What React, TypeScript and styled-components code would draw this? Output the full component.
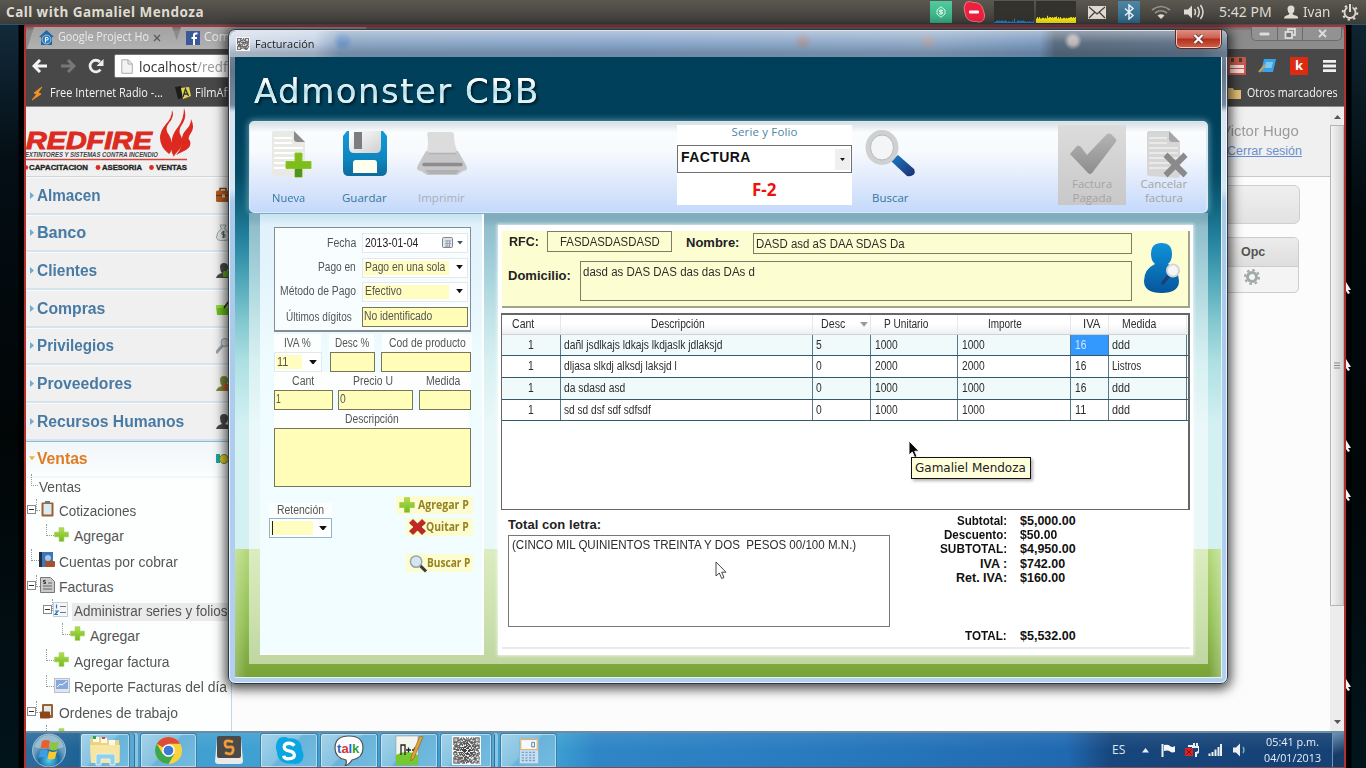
import React, { useLayoutEffect, useRef, useState } from "react";
import styled, { createGlobalStyle, css } from "styled-components";

const Global = createGlobalStyle`
  * { box-sizing: border-box; }
  body { margin: 0; overflow: hidden; background: #01070b; font-family: "Liberation Sans", Arial, sans-serif; }
  svg { display: block; flex: none; }
`;

const ubuntu = '"Noto Sans", "Open Sans", sans-serif';
const segoe = '"Open Sans", "Noto Sans", sans-serif';

/* ---------- text with an optional target width ---------- */
const TextBox = styled.span`
  display: inline-block;
  flex: none;
  justify-self: start;
  vertical-align: top;
  line-height: 1.2;
`;
const TextSpan = styled.span<{ $s: number; $c: string; $b?: boolean; $f?: string; $u?: boolean }>`
  display: inline-block;
  vertical-align: top;
  transform-origin: 0 50%;
  white-space: pre;
  font-size: ${(p) => p.$s}px;
  line-height: 1.2;
  color: ${(p) => p.$c};
  font-weight: ${(p) => (p.$b ? 700 : 400)};
  text-decoration: ${(p) => (p.$u ? "underline" : "none")};
  ${(p) => p.$f && css`font-family: ${p.$f};`}
`;

type TextProps = { children: string; w?: number; s?: number; c?: string; b?: boolean; f?: string; u?: boolean };

function Text({ children, w, s = 12, c = "#333", b, f, u }: TextProps) {
  const ref = useRef<HTMLSpanElement>(null);
  const [fit, setFit] = useState({ spacing: 0, scale: 1 });
  useLayoutEffect(() => {
    if (!w || !ref.current) return;
    const natural = ref.current.offsetWidth;
    if (natural > w) setFit({ spacing: 0, scale: w / natural });
    else setFit({ spacing: (w - natural) / children.length, scale: 1 });
  }, []);
  return (
    <TextBox style={{ width: w, fontSize: s }}>
      <TextSpan
        ref={ref}
        $s={s}
        $c={c}
        $b={b}
        $f={f}
        $u={u}
        style={{ letterSpacing: fit.spacing, transform: fit.scale === 1 ? undefined : `scaleX(${fit.scale})` }}
      >
        {children}
      </TextSpan>
    </TextBox>
  );
}

/* ---------- host desktop ---------- */
const Desktop = styled.div`
  position: relative;
  width: 1366px;
  height: 768px;
  overflow: hidden;
  display: flex;
  flex-direction: column;
`;
const TopPanel = styled.header`
  height: 25px;
  flex: none;
  display: flex;
  align-items: center;
  justify-content: space-between;
  padding: 0 7px 0 6px;
  background: linear-gradient(#5a584f, #3d3c38);
  border-bottom: 1px solid #2b5570;
`;
const Indicators = styled.div`
  display: flex;
  align-items: center;
  height: 24px;
`;
const Gap = styled.i<{ $w: number }>`
  flex: none;
  width: ${(p) => p.$w}px;
`;
const Tile = styled.div<{ $bg: string; $s?: number }>`
  width: ${(p) => p.$s ?? 22}px;
  height: ${(p) => p.$s ?? 22}px;
  display: flex;
  align-items: center;
  justify-content: center;
  background: ${(p) => p.$bg};
`;
const Stage = styled.div`
  flex: 1;
  display: flex;
  min-height: 0;
`;
const SideStrip = styled.div<{ $w: number; $right?: boolean }>`
  width: ${(p) => p.$w}px;
  flex: none;
  background: ${(p) =>
    p.$right
      ? "linear-gradient(90deg, #000 5px, transparent 6px), linear-gradient(#0e2430, #020a0e 25%, #010608 60%, #02151c)"
      : "linear-gradient(90deg, transparent 18px, #000 19px), linear-gradient(#122a3a, #040e15 18%, #010506 55%, #02141b)"};
`;
const Remote = styled.div`
  width: 1322px;
  flex: none;
  display: flex;
  flex-direction: column;
  border: 2px solid #b2302e;
  border-bottom: 1px solid #7d4a5c;
  border-radius: 2px 2px 0 0;
  overflow: hidden;
`;

/* ---------- browser ---------- */
const TabStrip = styled.div`
  height: 22px;
  flex: none;
  display: flex;
  background: linear-gradient(#7a6464, #8a8a8a 4px, #8c8c8c);
`;
const Tab = styled.div<{ $w: number; $ml?: number }>`
  width: ${(p) => p.$w}px;
  margin-left: ${(p) => p.$ml ?? 0}px;
  display: flex;
  align-items: center;
  gap: 4px;
  padding: 0 0 1px 12px;
  background: linear-gradient(#a2a2a2, #b1b1b1);
  clip-path: polygon(7px 0, calc(100% - 8px) 0, 100% 100%, 0 100%);
`;
const WinControls = styled.div`
  margin-left: auto;
  width: 91px;
  height: 14px;
  display: grid;
  grid-template-columns: 25px 25px 1fr;
  border: 1px solid #6b6b6b;
  border-top: 0;
  border-radius: 0 0 5px 5px;
  margin-right: 2px;
  background: #929292;
  & > div { display: grid; place-items: center; }
  & > div + div { border-left: 1px solid #6b6b6b; }
`;
const NavBar = styled.div`
  height: 34px;
  flex: none;
  display: flex;
  align-items: center;
  background: #484848;
  padding-left: 6px;
`;
const Address = styled.div`
  display: flex;
  align-items: center;
  gap: 6px;
  width: 300px;
  height: 24px;
  margin-left: 10px;
  padding-left: 6px;
  background: #fff;
  border: 1px solid #777;
  border-radius: 2px;
`;
const NavActions = styled.div`
  margin-left: auto;
  display: flex;
  align-items: center;
  padding-right: 8px;
`;
const Bookmarks = styled.div`
  height: 24px;
  flex: none;
  display: flex;
  align-items: center;
  padding: 0 5px 3px 5px;
  background: #484848;
  border-bottom: 1px solid #8b8b8b;
`;
const Page = styled.div`
  flex: 1;
  min-height: 0;
  display: flex;
  background: #fcfcfc;
`;
const Sidebar = styled.nav`
  width: 206px;
  flex: none;
  overflow: hidden;
  background: #fdfefe;
  border-right: 1px solid #c3d9e8;
`;
const LogoBox = styled.div`
  height: 70px;
  background: #f0f0f0;
  border-bottom: 1px solid #d0d5d8;
`;
const MenuRow = styled.div<{ $open?: boolean }>`
  height: 37.66px;
  display: flex;
  align-items: center;
  padding: 1px 0 1px 3px;
  gap: 2px;
  background: ${(p) => (p.$open ? "linear-gradient(#f1f6f9, #fbfdfe)" : "#f0f0f0")};
  border-top: 1px solid ${(p) => (p.$open ? "#8fb9d8" : "#fafafa")};
  border-bottom: 2px solid ${(p) => (p.$open ? "transparent" : "#d3e4ef")};
`;
const MenuName = styled.div`
  width: 177px;
  flex: none;
  display: flex;
`;
const TreeRow = styled.div<{ $x: number; $h: number }>`
  height: ${(p) => p.$h}px;
  display: flex;
  align-items: center;
  padding-left: ${(p) => p.$x}px;
  & > svg { margin-bottom: 5px; }
`;
const TreeText = styled.div<{ $hl?: boolean; $g?: number }>`
  margin-left: ${(p) => p.$g ?? 4}px;
  height: 18px;
  display: flex;
  align-items: center;
  flex: none;
  ${(p) => p.$hl && css`background: #eaeaea; width: 170px;`}
`;
const Dots = styled.i<{ $w: number }>`
  width: ${(p) => p.$w}px;
  height: 12px;
  margin-bottom: 14px;
  border-left: 1px dotted #999;
  border-bottom: 1px dotted #999;
`;
const MainCol = styled.main`
  flex: 1;
  display: flex;
  flex-direction: column;
  align-items: flex-end;
`;
const UserBar = styled.div`
  width: 100%;
  height: 70px;
  background: #f0f0f0;
  border-bottom: 1px solid #c9c9c9;
  display: flex;
  flex-direction: column;
  align-items: flex-end;
  padding: 15px 28px 0 0;
  gap: 3px;
  & > :first-child { margin-right: 3px; }
`;
const GreyBox = styled.div`
  width: 600px;
  height: 39px;
  margin: 8px 30px 0 0;
  border: 1px solid #cfcfcf;
  border-radius: 6px;
  background: linear-gradient(#efefef, #e2e2e2);
`;
const OpcBox = styled.div`
  width: 600px;
  height: 56px;
  margin: 13px 31px 0 0;
  border: 1px solid #ccc;
  border-radius: 5px;
  overflow: hidden;
  background: #f4f4f4;
  & > div { height: 29px; display: flex; align-items: center; justify-content: flex-end; padding-right: 33px; }
  & > div:first-child { background: linear-gradient(#ececec, #dedede); border-bottom: 1px solid #ccc; }
  & > div:last-child { height: 20px; padding-right: 37px; }
`;
const Scrollbar = styled.div`
  width: 14px;
  flex: none;
  display: flex;
  flex-direction: column;
  align-items: center;
  justify-content: space-between;
  padding: 8px 0 7px;
  background: #ececec;
`;
const Thumb = styled.div`
  width: 14px;
  flex: 1;
  margin: 6px 0 114px;
  display: grid;
  place-items: center;
  border: 1px solid #b5b5b5;
  background: linear-gradient(90deg, #f4f4f4, #d2d2d2);
`;

/* ---------- taskbar ---------- */
const Taskbar = styled.footer`
  height: 36px;
  flex: none;
  display: flex;
  align-items: stretch;
  border-top: 2px solid #6b8ca2;
  background: linear-gradient(rgba(255,255,255,.08), transparent 50%),
    linear-gradient(90deg, #2c6c9d, #1f6394 53px, #4a9fca 58px, #3fa0d2 200px, #3d9fd2 530px, #2f86c6 570px, #2a7cc0 760px, #2069b1 1040px, #17467c 1085px, #154174);
`;
const TaskButton = styled.div<{ $w: number; $ml?: number; $plain?: boolean; $deck?: number }>`
  width: ${(p) => p.$w}px;
  margin-left: ${(p) => p.$ml ?? 0}px;
  flex: none;
  display: grid;
  place-items: center;
  ${(p) =>
    !p.$plain &&
    css`
      border: 1px solid #3b7fa8;
      border-bottom: 0;
      border-radius: 3px 3px 0 0;
      background: linear-gradient(135deg, #a6d2e8, #86c4e2 45%, #68b3da 50%, #74bce0);
      box-shadow: inset 0 0 0 1px rgba(230, 245, 255, 0.55)${p.$deck ? `, ${p.$deck - 4}px 0 0 #5aa7cf, ${p.$deck - 3}px 0 0 #2f749c, ${p.$deck}px 0 0 #8ac6e3` : ""};
    `}
`;
const Tray = styled.div`
  margin-left: auto;
  display: flex;
  align-items: center;
`;
const Clock = styled.div`
  display: flex;
  flex-direction: column;
  align-items: center;
  width: 60px;
  gap: 2px;
  margin-left: 14px;
`;
const ShowDesktop = styled.div`
  width: 12px;
  height: 100%;
  margin-left: 10px;
  border-left: 1px solid #6f93b4;
  background: linear-gradient(160deg, #6f93b5, #173c68 60%);
`;

/* ---------- invoice window ---------- */
const Win = styled.section`
  position: absolute;
  left: 228px;
  top: 29px;
  width: 1000px;
  height: 655px;
  display: flex;
  flex-direction: column;
  padding: 0 5px 5px 6px;
  border: 1px solid #2c3a48;
  border-radius: 7px;
  background: linear-gradient(#8396ad, #66758a 40px, #77889c 75px, #d9e4f0 82px, #d8e5f3 160px, #aac8e8 172px, #b2d0f2);
  box-shadow: inset 0 0 0 1px rgba(255,255,255,.75), 0 2px 12px 3px rgba(0,0,0,.7);
`;
const TitleBar = styled.div`
  height: 26px;
  flex: none;
  margin: 1px -5px 0;
  display: flex;
  align-items: center;
  padding: 0 0 1px 6px;
  gap: 5px;
  border-radius: 6px 6px 0 0;
  background: linear-gradient(rgba(255,255,255,.35), rgba(255,255,255,0) 45%, rgba(30,50,70,.25) 85%),
    radial-gradient(circle at 573px 10px, rgba(180,140,130,.5) 4px, transparent 9px),
    radial-gradient(circle at 698px 10px, rgba(180,160,160,.6) 4px, transparent 9px),
    radial-gradient(circle at 843px 10px, rgba(230,215,210,.7) 4px, transparent 9px),
    radial-gradient(circle at 113px 10px, rgba(70,130,200,.4) 4px, transparent 10px),
    linear-gradient(90deg, #d5deeb, #c6d3e5 85px, #8fa9c6 110px, #8ba8cc 400px, #93acc9 700px, #7d9bc0 810px, #5d6e82 825px, #66788d 970px, #8295a8);
`;
const CloseButton = styled.div`
  align-self: flex-start;
  margin: -1px 6px 0 auto;
  width: 45px;
  height: 18px;
  display: grid;
  place-items: center;
  border: 1px solid #f2c8c0;
  border-top: 0;
  border-radius: 0 0 5px 5px;
  box-shadow: 0 0 0 1px #5a2a28;
  background: linear-gradient(#dd9084, #cc5f4e 48%, #b02f1c 52%, #cf5c40);
`;
const Body = styled.div`
  flex: 1;
  min-height: 0;
  display: flex;
  flex-direction: column;
  padding: 0 13px 13px 14px;
  border: 1px solid #e4f1f6;
  border-width: 0 1px 1px 0;
  background:
    linear-gradient(90deg, rgba(255,255,255,.25), transparent 12px, transparent calc(100% - 12px), rgba(255,255,255,.3)) 0 492px no-repeat,
    linear-gradient(#003f5a 0, #00405b 62px, #044b67 118px, #12657f 150px, #2685a0 185px, #4ba4b7 220px, #80c6ce 262px, #ade0e3 305px, #d4f1f2 370px, #d4f1f2 492px, #b5d97c 492px, #8fbd50 570px, #76a236);
`;
const Brand = styled.div`
  height: 64px;
  flex: none;
  display: flex;
  align-items: center;
  padding: 4px 0 0 5px;
  filter: drop-shadow(2px 2px 1px #00202f);
  & span {
    background: linear-gradient(#fff 25%, #b9dfe8 50%, #dff6f8 75%);
    -webkit-background-clip: text;
    background-clip: text;
    -webkit-text-fill-color: transparent;
  }
`;
const ToolBar = styled.div`
  height: 92px;
  flex: none;
  display: flex;
  padding: 3px 0 7px;
  border: 1px solid #d8e9f4;
  border-width: 1px 2px 1px 1px;
  border-radius: 5px;
  background: linear-gradient(#d4dfe3, #fafcfd 10px, #f7fafe 30px, #dfe9fc 60px, #c4d9fb);
  box-shadow: 0 0 6px 1px rgba(170, 210, 225, 0.55);
`;
const Tool = styled.div<{ $w?: number; $grey?: boolean; $ml?: number; $shift?: number }>`
  width: ${(p) => p.$w ?? 77}px;
  margin-left: ${(p) => p.$ml ?? 0}px;
  flex: none;
  height: 80px;
  display: flex;
  flex-direction: column;
  align-items: center;
  justify-content: space-between;
  padding-top: 5px;
  background: ${(p) => (p.$grey ? "linear-gradient(#dcdcdc, #c8c8c8)" : "none")};
  & > svg { margin-left: ${(p) => p.$shift ?? 1}px; }
  & > svg + * { position: relative; top: ${(p) => (p.$grey ? 0 : 0)}px; }
`;
const ToolLabel = styled.div`
  display: flex;
  flex-direction: column;
  align-items: center;
  margin-top: -6px;
`;
const Serie = styled.div`
  width: 175px;
  height: 80px;
  margin-left: 197px;
  flex: none;
  display: flex;
  flex-direction: column;
  align-items: center;
  background: #fff;
`;
const SerieSelect = styled.div`
  width: 175px;
  height: 28px;
  margin: 6px 0 7px;
  display: flex;
  align-items: stretch;
  justify-content: space-between;
  padding: 3px 1px 2px 3px;
  border: 1px solid #707070;
`;
const SelectArrow = styled.div`
  width: 15px;
  display: grid;
  place-items: center;
  background: #efefef;
`;
const Panels = styled.div`
  flex: 1;
  min-height: 0;
  display: flex;
  gap: 14px;
  padding: 1px 15px 9px 11px;
  background: linear-gradient(rgba(70,130,160,.4), transparent 14px), rgba(255, 255, 255, 0.52);
`;
const LeftPanel = styled.div`
  width: 224px;
  flex: none;
  padding: 13px 14px 0;
  border-right: 2px solid #fff;
  border-bottom: 2px solid #fff;
  background: linear-gradient(#c4e3f2, #e2f2fc 12px, #e4f4fc 60px, #effcff 150px, #f2fdff);
`;
const Group = styled.div`
  width: 197px;
  height: 105px;
  border: 1px solid #858c92;
  border-bottom-width: 2px;
  padding: 2px 2px 0 0;
  background: #f8fdff;
`;
const FieldRow = styled.div<{ $h: number; $pr?: number }>`
  height: ${(p) => p.$h}px;
  display: flex;
  align-items: center;
  justify-content: flex-end;
  gap: ${(p) => p.$pr ?? 6}px;
`;
const Combo = styled.div<{ $w: number; $focus?: boolean }>`
  width: ${(p) => p.$w}px;
  height: 20px;
  flex: none;
  display: flex;
  align-items: center;
  justify-content: space-between;
  padding: 2px 4px 2px 1px;
  background: #fff;
  border: 1px solid ${(p) => (p.$focus ? "#8fb3d6" : "#dfe9ee")};
`;
const ComboValue = styled.div<{ $w: number; $plain?: boolean }>`
  width: ${(p) => p.$w}px;
  height: 100%;
  display: flex;
  align-items: center;
  overflow: hidden;
  padding-left: 1px;
  background: ${(p) => (p.$plain ? "#fff" : "#fffdc0")};
`;
const Input = styled.div<{ $w: number; $h?: number }>`
  width: ${(p) => p.$w}px;
  height: ${(p) => p.$h ?? 20}px;
  flex: none;
  display: flex;
  padding: 1px 0 0 1px;
  border: 1px solid #76765c;
  background: #fffdb8;
`;
const Cells = styled.div<{ $cols: string; $h: number; $gap?: number; $pt?: number }>`
  display: grid;
  grid-template-columns: ${(p) => p.$cols};
  column-gap: ${(p) => p.$gap ?? 0}px;
  height: ${(p) => p.$h}px;
  padding-top: ${(p) => p.$pt ?? 0}px;
  width: 197px;
`;
const LabelCell = styled.div`
  display: flex;
  align-items: center;
  justify-content: center;
  background: rgba(255, 255, 255, 0.85);
`;
const Bottom = styled.div`
  display: flex;
  justify-content: space-between;
  margin: 0 -5px 0 -5px;
`;
const Retention = styled.div`
  width: 63px;
  padding-top: 16px;
  & > div:first-child { height: 15px; }
`;
const Actions = styled.div`
  display: flex;
  flex-direction: column;
  align-items: flex-end;
  gap: 4px;
  padding-top: 9px;
`;
const Action = styled.div<{ $w: number; $mt?: number }>`
  width: ${(p) => p.$w}px;
  height: 18px;
  margin-top: ${(p) => p.$mt ?? 0}px;
  display: flex;
  align-items: center;
  justify-content: space-between;
  padding: 0 4px 0 3px;
  background: #fdfcd0;
`;
const RightPanel = styled.div`
  flex: 1;
  margin-top: 11px;
  padding: 6px 3px 0 4px;
  background: #fff;
  box-shadow: 0 0 3px 1px rgba(255, 255, 255, 0.7);
`;
const Client = styled.div`
  height: 77px;
  display: flex;
  background: #fdfdd2;
  border: 1px solid #a3a38c;
  border-width: 0 2px 2px 0;
`;
const ClientFields = styled.div`
  width: 630px;
  flex: none;
`;
const ClientRow = styled.div<{ $mt?: number }>`
  display: flex;
  align-items: flex-start;
  margin-top: ${(p) => p.$mt ?? 0}px;
  & > :last-child { margin-left: auto; }
`;
const ClientLabel = styled.div<{ $pt: number; $ml: number; $w: number }>`
  display: flex;
  width: ${(p) => p.$w}px;
  padding-top: ${(p) => p.$pt}px;
  margin-left: ${(p) => p.$ml}px;
`;
const ClientInput = styled.div<{ $w: number; $h: number; $mt?: number; $pl?: number }>`
  display: flex;
  width: ${(p) => p.$w}px;
  height: ${(p) => p.$h}px;
  margin-top: ${(p) => p.$mt ?? 0}px;
  padding: 3px 0 0 ${(p) => p.$pl ?? 2}px;
  border: 1px solid #7d7d68;
`;
const Avatar = styled.div`
  padding: 11px 0 0 11px;
`;
const Table = styled.div`
  height: 197px;
  margin: 5px 0 0 -1px;
  border: 1px solid #666;
  border-width: 2px 2px 1px 1px;
  background: #fff;
`;
const cols = "59px 252px 58px 87px 113px 38px 78px";
const HeadRow = styled.div`
  display: grid;
  grid-template-columns: ${cols};
  height: 20px;
  align-items: center;
  background: linear-gradient(#fff 45%, #eeeff1);
  border-bottom: 1px solid #cfd2d5;
`;
const HeadCell = styled.div<{ $x: number }>`
  height: 19px;
  display: flex;
  align-items: center;
  gap: 15px;
  padding-left: ${(p) => p.$x}px;
  border-right: 1px solid #e6e7e9;
`;
const Row = styled.div<{ $alt?: boolean; $h: number }>`
  display: grid;
  grid-template-columns: ${cols};
  width: 686px;
  height: ${(p) => p.$h}px;
  background: ${(p) => (p.$alt ? "#f0fafa" : "#fff")};
  border-bottom: 1px solid #32596c;
`;
const Cell = styled.div<{ $sel?: boolean; $pl?: number }>`
  display: flex;
  align-items: center;
  padding-left: ${(p) => p.$pl ?? 3}px;
  border-right: 1px solid #56798b;
  background: ${(p) => (p.$sel ? "#3399ff" : "none")};
`;
const Footer = styled.div`
  display: flex;
  height: 139px;
  border-bottom: 2px solid #e8ebe8;
`;
const Letters = styled.div`
  display: flex;
  flex-direction: column;
  width: 388px;
  padding: 7px 0 0 6px;
`;
const LettersBox = styled.div`
  display: flex;
  width: 382px;
  height: 92px;
  margin-top: 2px;
  padding: 2px 0 0 3px;
  border: 1px solid #777;
`;
const Totals = styled.div`
  width: 200px;
  padding-top: 4px;
`;
const TotalRow = styled.div<{ $mt?: number }>`
  height: 14.2px;
  margin-top: ${(p) => p.$mt ?? 0}px;
  display: grid;
  grid-template-columns: 117px 1fr;
  column-gap: 13px;
  align-items: center;
  & > span:first-child { justify-self: end; }
`;

/* ---------- overlays ---------- */
const Overlay = styled.div<{ $x: number; $y: number }>`
  position: absolute;
  left: ${(p) => p.$x}px;
  top: ${(p) => p.$y}px;
`;
const Tooltip = styled.div`
  position: absolute;
  left: 911px;
  top: 457px;
  width: 120px;
  height: 22px;
  padding: 3px 0 0 3px;
  background: #ffffdc;
  border: 1px solid #111;
  box-shadow: 2px 2px 3px rgba(0, 0, 0, 0.3);
`;

/* ---------- icons ---------- */
const Caret = ({ c = "#111", w = 8 }: { c?: string; w?: number }) => (
  <svg width={w} height={w * 0.6} viewBox="0 0 8 5"><path d="M0 0h8L4 5z" fill={c} /></svg>
);
const Plus = ({ s = 15 }: { s?: number }) => (
  <svg width={s} height={s} viewBox="0 0 16 16">
    <defs><linearGradient id="pl" x2="0" y2="1"><stop stopColor="#b4e04e" /><stop offset="1" stopColor="#74b81e" /></linearGradient></defs>
    <path d="M5.500 .7h5v4.800h4.800v5h-4.800v4.800h-5v-4.800H.7v-5h4.800z" fill="url(#pl)" stroke="#8cc63a" strokeWidth=".6" />
  </svg>
);
const Qr = ({ s, n = 17 }: { s: number; n?: number }) => {
  const cells: React.ReactNode[] = [];
  for (let y = 0; y < n; y++)
    for (let x = 0; x < n; x++) {
      const corner = (x < 5 && y < 5) || (x > n - 6 && y < 5) || (x < 5 && y > n - 6);
      const cx = x < 5 ? x : x - (n - 5);
      const cy = y < 5 ? y : y - (n - 5);
      const ring = Math.max(Math.abs(cx - 2), Math.abs(cy - 2));
      const on = corner ? ring !== 1 : (x * 7 + y * 13 + x * y * 5 + ((x * x) ^ (y * 3))) % 5 < 3;
      if (on) cells.push(<rect key={`${x}-${y}`} x={x + 1.5} y={y + 1.5} width="1" height="1" />);
    }
  return (
    <svg width={s} height={s} viewBox={`0 0 ${n + 3} ${n + 3}`}>
      <rect width={n + 3} height={n + 3} fill="#f8f8f8" />
      <g fill="#2b2b2b">{cells}</g>
    </svg>
  );
};
const Sheet = ({ grey, children }: { grey?: boolean; children: React.ReactNode }) => (
  <svg width="42" height="50" viewBox="0 0 42 50">
    <path d="M1 3q0-2 2-2h20l11 11v33q0 3-3 3L3 46q-2 0-2-2z" fill={grey ? "#d6d6d6" : "#e9e9e6"} />
    {[8, 13, 18, 23, 28, 33, 38].map((y) => (
      <path key={y} d={`M3 ${y}h${y < 14 ? 18 : 29}`} stroke={grey ? "#e9e9e9" : "#fff"} strokeWidth="2" />
    ))}
    <path d="M23 1l11 11h-8q-3 0-3-3z" fill={grey ? "#a6a6a6" : "#8a8a88"} />
    {children}
  </svg>
);
const Floppy = () => (
  <svg width="46" height="48" viewBox="0 0 46 48">
    <defs><linearGradient id="fl" x2="0" y2="1"><stop stopColor="#139ad8" /><stop offset=".6" stopColor="#0f86c0" /><stop offset="1" stopColor="#0d6b9c" /></linearGradient>
      <linearGradient id="fm" x2="1" y2="1"><stop stopColor="#fff" /><stop offset="1" stopColor="#cfcfcf" /></linearGradient></defs>
    <path d="M5 1h36l4 5v34q0 6-6 6H7q-6 0-6-6V6z" fill="url(#fl)" />
    <path d="M7 1h32v16q0 6-5 6H12q-5 0-5-6z" fill="url(#fm)" />
    <path d="M12 2h8v17h-8z" fill="#7b7d80" />
    <path d="M11 43V33q0-3 3-3h18q3 0 3 3v10z" fill="#fffff0" />
  </svg>
);
const Printer = () => (
  <svg width="52" height="46" viewBox="0 0 52 46">
    <path d="M10 21h32l8 14q1 2 1 4-1 2-4 2l-6 4H11l-6-4q-3 0-4-2 0-2 1-4z" fill="#c6c6c8" />
    <path d="M11 4q0-2 2-2h22q3 0 3 3 0 9 3 15l-2 3H14l-3-2q2-9 0-17z" fill="#dcdcdc" />
    <path d="M13 23.500h27" stroke="#b2b2b4" strokeWidth="1.500" />
    <path d="M8 34.500h37" stroke="#8d8d90" strokeWidth="3.400" strokeLinecap="round" />
    <path d="M9 40h35l-4 4H13z" fill="#b1b1b4" />
  </svg>
);
const BigLens = () => (
  <svg width="52" height="48" viewBox="0 0 52 48">
    <defs><linearGradient id="ln" x2="1" y2="1"><stop stopColor="#1b7fc4" /><stop offset="1" stopColor="#1d2c70" /></linearGradient></defs>
    <path d="M26 31l7-6 16 14q2 4-1 6t-6 1z" fill="url(#ln)" />
    <ellipse cx="17" cy="17.500" rx="14" ry="15" fill="#f3f5f6" stroke="#cfd0d0" strokeWidth="5" />
    <ellipse cx="17" cy="17.500" rx="11.500" ry="12.500" fill="none" stroke="#b9b9b9" strokeWidth="1" />
  </svg>
);
const Check = () => (
  <svg width="48" height="44" viewBox="0 0 48 44">
    <defs><linearGradient id="ck" x2="0" y2="1"><stop stopColor="#b4b4b4" /><stop offset="1" stopColor="#8d8d8d" /></linearGradient></defs>
    <path d="M1 24l7-8q2-1 4 1l6 8L38 4q2-1 4 0l5 5q1 2-1 4L23 43q-2 2-4 0z" fill="url(#ck)" />
  </svg>
);
const Person = ({ c, x }: { c: string; x?: string }) => (
  <svg width="18" height="17" viewBox="0 0 18 17">
    <path d="M4 5q0-4 4-4t4 4-3 6q6 1 7 5H0q1-4 6-5-2-2-2-6z" fill={c} />
    {x && <rect x="7" y="9" width="9" height="6" rx="1.500" fill={x} />}
  </svg>
);
const ClientSearch = () => (
  <svg width="38" height="52" viewBox="0 0 38 52">
    <defs><linearGradient id="cl" x2="0" y2="1"><stop stopColor="#0f93da" /><stop offset="1" stopColor="#06559c" /></linearGradient></defs>
    <path d="M8 12Q8 1 18.500 1T29 12q0 7-4 10 11 5 11 17 0 12-17.500 12T1 39Q1 27 12 22 8 19 8 12z" fill="url(#cl)" />
    <path d="M27 32l-7 9" stroke="#1b3f78" strokeWidth="3.500" strokeLinecap="round" />
    <circle cx="30" cy="28.500" r="6" fill="#f6f6f6" stroke="#d4d6d8" strokeWidth="2" />
  </svg>
);
const MinusBox = () => (
  <svg width="9" height="9" viewBox="0 0 9 9"><rect x=".5" y=".5" width="8" height="8" fill="#fff" stroke="#888" /><path d="M2 4.500h5" stroke="#333" /></svg>
);
const Clip = () => (
  <svg width="13" height="16" viewBox="0 0 13 16"><rect x=".5" y="1.500" width="12" height="14" rx="1" fill="#a0602c" /><rect x="2.500" y="3" width="8" height="10.500" fill="#d8ecf6" /><rect x="4" y="0" width="5" height="3" fill="#777" /></svg>
);
const Ledger = () => (
  <svg width="16" height="16" viewBox="0 0 16 16"><rect x="0" y="0" width="14" height="15" fill="#3e74b8" /><rect width="3" height="15" fill="#22303f" /><circle cx="9" cy="6" r="3" fill="#a9c6e8" /><rect x="6" y="9" width="10" height="6" rx="1" fill="#a3532a" /></svg>
);
const Doc = () => (
  <svg width="15" height="16" viewBox="0 0 15 16"><path d="M.5.5h10l4 4v11H.5z" fill="#c9c9c9" stroke="#777" /><path d="M3 9h9M3 12h9M8 6h4" stroke="#666" /><path d="M5.500 3.500h-2v1.500h2v1.500h-2" stroke="#333" fill="none" /></svg>
);
const ListIcon = () => (
  <svg width="15" height="15" viewBox="0 0 15 15"><rect x=".5" y=".5" width="14" height="14" fill="#f3f7fa" stroke="#c5ccd3" /><path d="M3.500 2.500v4M2 9h3l-3 3.500h3" stroke="#2a78c0" fill="none" strokeWidth="1.200" /><path d="M7 4.500h6M7 10.500h6" stroke="#777" /></svg>
);
const ChartIcon = () => (
  <svg width="16" height="15" viewBox="0 0 16 15"><rect x=".5" y=".5" width="15" height="14" fill="#dfe6ef" stroke="#b9c0ca" /><rect x="2" y="2" width="12" height="9" fill="#86a8de" /><path d="M3 9l3-3 2 1 5-4" stroke="#fff" fill="none" /></svg>
);
const Work = () => (
  <svg width="14" height="16" viewBox="0 0 14 16"><rect x="2" y="1" width="11" height="14" rx="1" fill="#a0602c" /><rect x="4" y="3" width="7" height="9" fill="#d8ecf6" /><rect x="0" y="8.500" width="10" height="7" rx="1" fill="#8d4519" /></svg>
);
const Case = () => (
  <svg width="18" height="16" viewBox="0 0 18 16"><path d="M4 4V1.500h6V4" fill="none" stroke="#7b3d12" strokeWidth="1.500" /><rect x="0" y="3.500" width="15" height="11.500" rx="1.500" fill="#b05a20" /><path d="M0 8.500h15" stroke="#74350d" strokeWidth="1.200" /><rect x="6" y="7.500" width="3" height="3" fill="#e0c090" /></svg>
);
const Bag = () => (
  <svg width="18" height="17" viewBox="0 0 18 17"><path d="M4 1h6L8.500 5q6 4 5 9-1 3-6 2.500Q.5 17 .5 13q0-5 5-8z" fill="#dfe6e4" stroke="#9aa5a3" /><path d="M9 8H6v2.500h3V13H6M7.500 7v7" stroke="#566" fill="none" /></svg>
);
const Basket = () => (
  <svg width="18" height="16" viewBox="0 0 18 16"><path d="M0 5h18l-1 10H1z" fill="#6cc11c" /><path d="M0 5h18v3H0z" fill="#93dc3f" /><path d="M8 8l5-7" stroke="#222" strokeWidth="1.500" /></svg>
);
const Key = () => (
  <svg width="18" height="17" viewBox="0 0 18 17"><path d="M0 16l7-8" stroke="#9aa3a8" strokeWidth="3" /><circle cx="9" cy="5.500" r="4" fill="#d6dbde" stroke="#949da2" /></svg>
);
const Coins = () => (
  <svg width="18" height="14" viewBox="0 0 18 14"><rect x="0" y="2" width="4" height="9" fill="#19a4a8" /><circle cx="8" cy="7" r="4.500" fill="#e8c82a" stroke="#4a9c3a" /></svg>
);
const Flame = () => (
  <svg width="206" height="69" viewBox="0 0 206 69">
    <path d="M146 3q3 6-3 13-5 6 0 12 4 6 2 16-1 3-2 3-9-7-9-16 0-7 6-14 6-6 6-14z" fill="#dd2a20" />
    <path d="M158 1q3 8-1 15-6 8-2 13 4 7-2 14-5 5-5 7-5-8-2-18 1-6 6-12 6-8 6-19z" fill="#dd2a20" />
    <path d="M165 12q4 8 0 14-4 5-1 8 2 5-4 9-6 3-10 5 7-8 6-16 0-5 4-9 5-5 5-11z" fill="#dd2a20" />
    <path d="M0 52.500h161" stroke="#d4433c" strokeWidth="1.400" />
    <text x="0" y="41.500" fontFamily="Liberation Sans" fontWeight="700" fontStyle="italic" fontSize="23" fill="#dc2b21" stroke="#dc2b21" strokeWidth=".9" textLength="126" lengthAdjust="spacingAndGlyphs">REDFIRE</text>
    <text x="-1" y="50" fontFamily="Liberation Sans" fontStyle="italic" fontWeight="700" fontSize="6.500" fill="#444" textLength="133" lengthAdjust="spacingAndGlyphs">EXTINTORES Y SISTEMAS CONTRA INCENDIO</text>
    <g fontFamily="Liberation Sans" fontWeight="700" fontSize="7.500" fill="#222" stroke="#222" strokeWidth=".3">
      <text x="3" y="63" textLength="59" lengthAdjust="spacingAndGlyphs">CAPACITACION</text>
      <text x="76" y="63" textLength="40" lengthAdjust="spacingAndGlyphs">ASESORIA</text>
      <text x="130" y="63" textLength="31" lengthAdjust="spacingAndGlyphs">VENTAS</text>
    </g>
    <g fill="#dc2b21"><circle cx="0" cy="60.500" r="2.200" /><circle cx="72" cy="60.500" r="2.400" /><circle cx="125.500" cy="60.500" r="2.400" /></g>
  </svg>
);
const Meter = ({ c, base, seed }: { c: string; base: number; seed: number }) => (
  <svg width="40" height="23" viewBox="0 0 40 23">
    <rect width="40" height="23" fill="#33322d" />
    {Array.from({ length: 40 }, (_, i) => {
      const h = base + ((i * seed + ((i * i) % 7)) % 3) * 0.7 + (i === 20 ? 2 : i === 11 ? 2 : 0);
      return <rect key={i} x={i} y={22 - h} width="1.050" height={h} fill={c} />;
    })}
  </svg>
);
const Pointer = ({ dark }: { dark?: boolean }) => (
  <svg width="12" height="19" viewBox="0 0 12 19">
    <path d="M1 1v14l3.300-3 2.400 5.500 2.300-1-2.300-5.300H11z" fill={dark ? "#050505" : "#fff"} stroke={dark ? "#fff" : "#333"} strokeWidth=".9" />
  </svg>
);

const menu: [string, number, React.ReactNode][] = [
  ["Almacen", 64, <Case />],
  ["Banco", 49, <Bag />],
  ["Clientes", 60, <Person c="#4a4a4c" x="#5fae25" />],
  ["Compras", 68, <Basket />],
  ["Privilegios", 77, <Key />],
  ["Proveedores", 95, <Person c="#7a8a3a" x="#c5602a" />],
  ["Recursos Humanos", 147, <Person c="#4a4a4c" />],
];

const rows: [boolean, number, string, number, string, string, string, string, number][] = [
  [true, 21, "dañl jsdlkajs ldkajs lkdjaslk jdlaksjd", 158, "5", "1000", "16", "ddd", 18],
  [false, 22, "dljasa slkdj alksdj laksjd l", 113, "0", "2000", "16", "Listros", 29],
  [true, 21.5, "da sdasd asd", 61, "0", "1000", "16", "ddd", 18],
  [false, 21.5, "sd sd dsf sdf sdfsdf", 87, "0", "1000", "11", "ddd", 18],
];

const totals: [string, number, string, number, number][] = [
  ["Subtotal:", 50, "$5,000.00", 56, 0],
  ["Descuento:", 63, "$50.00", 37, 0],
  ["SUBTOTAL:", 67, "$4,950.00", 56, 0],
  ["IVA :", 27, "$742.00", 45, 0],
  ["Ret. IVA:", 51, "$160.00", 45, 0],
  ["TOTAL:", 42, "$5,532.00", 56, 44],
];

function BrowserPane() {
  return (
    <>
      <TabStrip>
        <Gap $w={1} />
        <Tab $w={153}>
          <svg width="15" height="16" viewBox="0 0 15 16"><path d="M7.500 0L15 7h-2v8H2V7H0z" fill="#2368a4" /><circle cx="7.500" cy="9.500" r="4.500" fill="#2f80bd" stroke="#cde" strokeWidth=".7" /><path d="M6.500 12.500v-5h1.500a1.200 1.200 0 010 2.500H6.500" stroke="#fff" fill="none" /></svg>
          <Text s={12} f={segoe} c="#e8e8e8" w={91}>Google Project Ho</Text>
          <svg width="8" height="8" viewBox="0 0 8 8"><path d="M1 1l6 6M7 1L1 7" stroke="#5c5c5c" strokeWidth="1.400" /></svg>
        </Tab>
        <Tab $w={200} $ml={-6}>
          <svg width="14" height="14" viewBox="0 0 14 14"><rect width="14" height="14" fill="#3b5998" /><path d="M9 14V8h2V6H9V4.500q0-1 1-1h1.500v-2H9.500Q7 1.500 7 4v2H5.500v2H7v6z" fill="#fff" /></svg>
          <Text s={12} f={segoe} c="#e8e8e8">Comisión</Text>
        </Tab>
        <WinControls>
          <div><svg width="11" height="4"><rect width="11" height="4" rx="1" fill="#ddd" stroke="#555" strokeWidth=".6" /></svg></div>
          <div><svg width="13" height="12" viewBox="0 0 13 12"><rect x="4" y="1" width="7" height="6" fill="none" stroke="#ddd" strokeWidth="1.800" /><rect x="1.500" y="4" width="6.500" height="6" fill="#777" stroke="#ddd" strokeWidth="1.800" /></svg></div>
          <div><svg width="9" height="9" viewBox="0 0 9 9"><path d="M1 1l7 7M8 1L1 8" stroke="#ddd" strokeWidth="1.800" /></svg></div>
        </WinControls>
      </TabStrip>
      <NavBar>
        <svg width="16" height="14" viewBox="0 0 16 14"><path d="M15 7H2M8 1L2 7l6 6" fill="none" stroke="#f4f4f4" strokeWidth="3" /></svg>
        <Gap $w={12} />
        <svg width="16" height="14" viewBox="0 0 16 14"><path d="M1 7h13M8 1l6 6-6 6" fill="none" stroke="#777" strokeWidth="3" /></svg>
        <Gap $w={12} />
        <svg width="16" height="16" viewBox="0 0 16 16"><path d="M12.500 11.500A5.800 5.800 0 1112 4" fill="none" stroke="#eee" strokeWidth="2.800" /><path d="M15.500 1v7h-7z" fill="#eee" /></svg>
        <Address>
          <svg width="12" height="15" viewBox="0 0 12 15"><path d="M.8.8h6.500l4 4v9.500H.8z" fill="#f3f3f3" stroke="#aaa" /><path d="M7 1v4h4" fill="none" stroke="#aaa" /></svg>
          <div><Text s={15} f={segoe} c="#333" w={58}>localhost</Text><Text s={15} f={segoe} c="#9a9a9a" w={47}>/redfire</Text></div>
        </Address>
        <NavActions>
          <svg width="18" height="18" viewBox="0 0 18 18"><rect width="18" height="18" rx="1" fill="#c9574f" /><rect x="2" y="8" width="14" height="3" fill="#f7dcd8" /><rect x="2" y="12" width="14" height="4" fill="#f7dcd8" /><path d="M3 1h3v4H3zM11 1h3v4h-3z" fill="#442" /></svg>
          <Gap $w={12} />
          <svg width="19" height="16" viewBox="0 0 19 16"><path d="M6 1h12l-3 13H3z" fill="#3aa2e4" /><path d="M8 4h7l-1.500 6H6.500z" fill="#7cc8f3" /><path d="M1 14l6-7" stroke="#c8a24a" strokeWidth="2" /></svg>
          <Gap $w={13} />
          <Tile $bg="#dd2a12" $s={18}><Text s={13} b c="#fff" f="Open Sans, sans-serif">k</Text></Tile>
          <Gap $w={15} />
          <svg width="13" height="14" viewBox="0 0 14 14"><path d="M0 2h14M0 7h14M0 12h14" stroke="#f0f0f0" strokeWidth="3" /></svg>
        </NavActions>
      </NavBar>
      <Bookmarks>
        <svg width="12" height="15" viewBox="0 0 12 15"><path d="M11 1L3 7l3 1-5 6 9-6-3-1.500z" fill="#f29220" stroke="#f29220" /></svg>
        <Gap $w={7} />
        <Text s={12} f={segoe} c="#f4f4f4" w={113}>Free Internet Radio -...</Text>
        <Gap $w={12} />
        <svg width="16" height="14" viewBox="0 0 16 14"><path d="M0 1l6-1 2 12-5 1z" fill="#1c1c1c" /><path d="M6 2l8-1 2 9-8 3z" fill="#e7d545" /><path d="M8 11l2.500-8 3 7M9 8h4" stroke="#234" fill="none" strokeWidth="1.300" /></svg>
        <Gap $w={4} />
        <Text s={12} f={segoe} c="#f4f4f4" w={58}>FilmAffinity</Text>
        <Gap $w={975} />
        <svg width="13" height="12" viewBox="0 0 13 12"><path d="M0 1h5l1 2h7v9H0z" fill="#e6c274" /></svg>
        <Gap $w={6} />
        <Text s={12} f={segoe} c="#f4f4f4" w={91}>Otros marcadores</Text>
      </Bookmarks>
    </>
  );
}

function SideMenu() {
  return (
    <Sidebar>
      <LogoBox><Flame /></LogoBox>
      {menu.map(([name, w, icon]) => (
        <MenuRow key={name}>
          <svg width="6" height="9" viewBox="0 0 6 9"><path d="M1 1l4 3.500L1 8z" fill="#6bacd2" /></svg>
          <MenuName><Text s={16} b c="#487aa3" w={w}>{name}</Text></MenuName>
          {icon}
        </MenuRow>
      ))}
      <MenuRow $open>
        <svg width="6" height="5" viewBox="0 0 7 5"><path d="M0 0h7L3.500 4.500z" fill="#f0b030" /></svg>
        <MenuName><Text s={16} b c="#e07b22" w={51}>Ventas</Text></MenuName>
        <Coins />
      </MenuRow>
      <TreeRow $x={5} $h={18}><Dots $w={7} /><TreeText $g={1}><Text s={14} c="#555" w={42}>Ventas</Text></TreeText></TreeRow>
      <TreeRow $x={1} $h={31}><MinusBox /><Dots $w={4} /><Gap $w={1} /><Clip /><TreeText $g={5}><Text s={14} c="#555" w={77}>Cotizaciones</Text></TreeText></TreeRow>
      <TreeRow $x={20} $h={19}><Dots $w={8} /><Plus /><TreeText $g={5}><Text s={14} c="#555" w={50}>Agregar</Text></TreeText></TreeRow>
      <TreeRow $x={5} $h={32}><Dots $w={8} /><Ledger /><TreeText><Text s={14} c="#555" w={119}>Cuentas por cobrar</Text></TreeText></TreeRow>
      <TreeRow $x={1} $h={19}><MinusBox /><Dots $w={4} /><Doc /><TreeText><Text s={14} c="#555" w={54}>Facturas</Text></TreeText></TreeRow>
      <TreeRow $x={17} $h={29}><MinusBox /><Dots $w={4} /><ListIcon /><TreeText $hl><Gap $w={2} /><Text s={14} c="#555" w={154}>Administrar series y folios</Text></TreeText></TreeRow>
      <TreeRow $x={36} $h={20}><Dots $w={8} /><Plus /><TreeText $g={5}><Text s={14} c="#555" w={50}>Agregar</Text></TreeText></TreeRow>
      <TreeRow $x={20} $h={32}><Dots $w={8} /><Plus /><TreeText $g={5}><Text s={14} c="#555" w={96}>Agregar factura</Text></TreeText></TreeRow>
      <TreeRow $x={20} $h={19}><Dots $w={8} /><ChartIcon /><TreeText><Text s={14} c="#555" w={153}>Reporte Facturas del día</Text></TreeText></TreeRow>
      <TreeRow $x={1} $h={33}><MinusBox /><Dots $w={4} /><Work /><TreeText $g={5}><Text s={14} c="#555" w={119}>Ordenes de trabajo</Text></TreeText></TreeRow>
      <TreeRow $x={20} $h={15}><Dots $w={8} /><Plus /></TreeRow>
    </Sidebar>
  );
}

function TaskbarPane() {
  return (
    <Taskbar>
      <TaskButton $plain $w={45}>
        <svg width="36" height="34" viewBox="0 0 36 34">
          <defs><radialGradient id="orb" cy=".8"><stop stopColor="#4fd0f4" /><stop offset=".6" stopColor="#1c6a9f" /><stop offset="1" stopColor="#6f9fbe" /></radialGradient></defs>
          <circle cx="18" cy="17.500" r="16.500" fill="url(#orb)" stroke="#b8cfdf" strokeWidth=".8" />
          <path d="M3 14Q8 2 18 2t15 12q-14 5-30 0z" fill="#fff" opacity=".3" />
          <path d="M11 8q4-2 8 0l-1.500 8q-4-2-8 0z" fill="#e8612c" /><path d="M20 8.500q4 2 8 0l-2 8q-4 2-7.500 0z" fill="#8cc63f" />
          <path d="M9 17.500q4-2 8 0L15.500 25q-4-2-8 0z" fill="#3c9ee5" /><path d="M18 18q4 2 8 0l-2 7.500q-4 2-7.500 0z" fill="#fbc82e" />
        </svg>
      </TaskButton>
      <TaskButton $w={50} $ml={9} $deck={8}>
        <svg width="34" height="31" viewBox="0 0 34 31"><path d="M2 4l10-2 3 3h16l1 22H3z" fill="#ecd285" /><path d="M5 2h6v5H5zM13 3h6v5h-6zM21 5h6v5h-6z" fill="#fffbe8" /><path d="M5 1h3v3H5z" fill="#3ba23a" /><path d="M14 2h3v2h-3z" fill="#d43" /><path d="M2 10h30l-1 18H3z" fill="#f7e6a2" /><path d="M8 30v-9q0-2 2-2h15q2 0 2 2v9h-5v-6h-9v6z" fill="#8fd0ea" stroke="#d8f2fb" /></svg>
      </TaskButton>
      <TaskButton $w={57} $ml={10}>
        <svg width="29" height="29" viewBox="0 0 30 30"><circle cx="15" cy="15" r="14" fill="#f9d33c" /><path d="M15 15L2.900 8A14 14 0 0127.100 8H15z" fill="#dd4b3a" /><path d="M2.900 8A14 14 0 0015 29l6-10.500L15 15l-6 3.500z" fill="#3fa650" /><circle cx="15" cy="15" r="6.500" fill="#fff" /><circle cx="15" cy="15" r="5" fill="#3f79d6" /></svg>
      </TaskButton>
      <TaskButton $plain $w={62} $ml={1}>
        <svg width="30" height="30" viewBox="0 0 30 30"><path d="M3 3h24l2 23q0 3-3 3H4q-3 0-3-3z" fill="#e9e9e9" /><rect x="3" y="1" width="24" height="22" rx="2" fill="#4c4a48" /><path d="M19 7q-8-3-8 1.500t4.500 3.500 3.500 4-8 1.500" fill="none" stroke="#f09a3a" strokeWidth="2.800" /></svg>
      </TaskButton>
      <TaskButton $w={58}>
        <svg width="29" height="30" viewBox="0 0 30 30"><path d="M4 2q6-3 10 0 13-1 14 12 3 6 0 11-4 5-10 3Q3 29 2 16-1 8 4 2z" fill="#0ba5e4" /><path d="M20 9.500Q18 7 14.500 7 9.500 7 9.500 10.500t5 4.300 5.500 4.200-5 4-6-3" fill="none" stroke="#fff" strokeWidth="3.400" /></svg>
      </TaskButton>
      <TaskButton $w={58} $ml={2}>
        <svg width="30" height="31" viewBox="0 0 30 31"><path d="M15 1q14 0 14 12 0 10-11 12-2 4-7 6 2-3 1-6Q1 23 1 13 1 1 15 1z" fill="#fff" stroke="#555" strokeWidth="1.200" /><g fontFamily="Liberation Sans" fontWeight="700" fontSize="13"><text x="3" y="18" fill="#2b65c8">t</text><text x="7.500" y="18" fill="#d33">a</text><text x="14.500" y="18" fill="#2b65c8">l</text><text x="18" y="18" fill="#2f9e3a">k</text></g></svg>
      </TaskButton>
      <TaskButton $w={58} $ml={2}>
        <svg width="30" height="31" viewBox="0 0 30 31"><rect x="2" y="1" width="22" height="29" fill="#f3f6ee" stroke="#999" strokeWidth=".6" /><path d="M2 20q10-6 22 0v10H2z" fill="#73c92d" /><path d="M7 20V10h4v10M12 15h5M14.500 12.500v5M18 15h5M20.500 12.500v5" stroke="#222" fill="none" strokeWidth="1.300" /><path d="M26 1l3 1-9 21-3 3v-4z" fill="#e3a33a" stroke="#8a5a1a" strokeWidth=".6" /></svg>
      </TaskButton>
      <TaskButton $w={52} $ml={2} $deck={6}><Qr s={29} n={27} /></TaskButton>
      <TaskButton $w={57} $ml={8}>
        <svg width="20" height="28" viewBox="0 0 22 29"><rect x=".5" y=".5" width="21" height="28" rx="1" fill="#c9dff0" stroke="#8eb4d2" /><rect x="2" y="2" width="18" height="11" fill="#f5faff" stroke="#e2a64d" /><path d="M14 5h3v5h-3z" fill="none" stroke="#4a78a8" />{[16, 19, 22, 25].map((y) => <path key={y} d={`M3 ${y}h16`} stroke="#6fa0cc" strokeWidth="1.500" strokeDasharray="2.500 1.500" />)}</svg>
      </TaskButton>
      <Tray>
        <Text s={12} f={segoe} c="#dbe7f2" w={13}>ES</Text>
        <Gap $w={17} />
        <svg width="7" height="5" viewBox="0 0 7 5"><path d="M3.500 0L7 4.500H0z" fill="#e8eff6" /></svg>
        <Gap $w={12} />
        <svg width="15" height="13" viewBox="0 0 15 13"><path d="M1.500 0v13" stroke="#eee" strokeWidth="2" /><path d="M3 1q4-1 6 1t5 0v6q-3 1-5-.5T3 7z" fill="#f6f6f6" /></svg>
        <Gap $w={9} />
        <svg width="14" height="14" viewBox="0 0 14 14"><path d="M3 3h6M9 0v4M12 0v4M7 4h7v4q-1 2-3 2v4" stroke="#eee" strokeWidth="2" fill="none" /><rect x="0" y="5" width="8" height="8" fill="#d22" /><path d="M1.500 6.500l5 5M6.500 6.500l-5 5" stroke="#700" /></svg>
        <Gap $w={9} />
        <svg width="14" height="12" viewBox="0 0 14 12"><path d="M1.500 12V9.500M4.500 12V8M7.500 12V5.500M10.500 12V3M13 12V0" stroke="#eee" strokeWidth="2" /></svg>
        <Gap $w={11} />
        <svg width="13" height="14" viewBox="0 0 13 14"><path d="M0 4.500h3L7 .5v13l-4-4H0z" fill="#eee" /><path d="M10 4q2 3 0 6" stroke="#8ab" fill="none" strokeWidth="1.400" /></svg>
        <Gap $w={2} />
        <Clock>
          <Text s={11.500} f={segoe} c="#e8f0f8" w={53}>05:41 p.m.</Text>
          <Text s={11.500} f={segoe} c="#e8f0f8" w={57}>04/01/2013</Text>
        </Clock>
        <ShowDesktop />
      </Tray>
    </Taskbar>
  );
}

function ToolStrip() {
  const blue = "#35779f";
  const grey = "#a9aeb6";
  return (
    <ToolBar>
      <Tool $w={76} $shift={7}>
        <Sheet><path d="M24 23h7v8.500h9v7h-9V47h-7v-8.500h-9v-7h9z" fill="#7fbc1d" stroke="#8cc820" strokeWidth="1" /><path d="M24 39h7v8h-7z" fill="#4e9425" /></Sheet>
        <Text s={11.500} f={segoe} c={blue} w={33}>Nueva</Text>
      </Tool>
      <Tool><Floppy /><Text s={11.500} f={segoe} c={blue} w={45}>Guardar</Text></Tool>
      <Tool><Printer /><Text s={11.500} f={segoe} c={grey} w={47}>Imprimir</Text></Tool>
      <Serie>
        <Text s={11.500} f={segoe} c="#4d87a3" w={66}>Serie y Folio</Text>
        <SerieSelect>
          <Text s={14} b c="#111" w={70}>FACTURA</Text>
          <SelectArrow><Caret w={5} /></SelectArrow>
        </SerieSelect>
        <Text s={17} b f={segoe} c="#f0100c" w={25}>F-2</Text>
      </Serie>
      <Tool><BigLens /><Text s={11.500} f={segoe} c={blue} w={37}>Buscar</Text></Tool>
      <Tool $w={68} $ml={129} $grey>
        <Check />
        <ToolLabel><Text s={11.500} f={segoe} c="#a4a4a4" w={40}>Factura</Text><Text s={11.500} f={segoe} c="#a4a4a4" w={39}>Pagada</Text></ToolLabel>
      </Tool>
      <Tool $w={76} $shift={5}>
        <Sheet grey><path d="M21.500 22.500l8 8 8-8 4 4.500-8 8 8 8-4 4.500-8-8-8 8-4-4.500 8-8-8-8z" fill="#8a8a8a" /></Sheet>
        <ToolLabel><Text s={11.500} f={segoe} c="#a4a4a4" w={47}>Cancelar</Text><Text s={11.500} f={segoe} c="#a4a4a4" w={38}>factura</Text></ToolLabel>
      </Tool>
    </ToolBar>
  );
}

function ProductForm() {
  const g = "#555";
  return (
    <LeftPanel>
      <Group>
        <FieldRow $h={26}>
          <Text s={12} c={g} w={29}>Fecha</Text>
          <Combo $w={106}>
            <ComboValue $w={62} $plain><Text s={12} c="#222" w={53}>2013-01-04</Text></ComboValue>
            <Gap $w={10} />
            <svg width="12" height="12" viewBox="0 0 12 12"><rect x=".5" y=".5" width="10" height="10" rx="1" fill="#dfe3ea" stroke="#808690" /><path d="M3 4h6M3 6.500h6M3 9h4M5 3v7M7.500 3v7" stroke="#9aa2b2" /></svg>
            <Caret c="#456" w={6} />
          </Combo>
        </FieldRow>
        <FieldRow $h={23}>
          <Text s={12} c={g} w={38}>Pago en</Text>
          <Combo $w={106}><ComboValue $w={85}><Text s={12} c={g} w={80}>Pago en una sola</Text></ComboValue><Caret w={7} /></Combo>
        </FieldRow>
        <FieldRow $h={25}>
          <Text s={12} c={g} w={76}>Método de Pago</Text>
          <Combo $w={106}><ComboValue $w={85}><Text s={12} c={g} w={37}>Efectivo</Text></ComboValue><Caret w={7} /></Combo>
        </FieldRow>
        <FieldRow $h={26} $pr={10}>
          <Text s={12} c={g} w={66}>Últimos dígitos</Text>
          <Input $w={106}><Text s={12} c={g} w={68}>No identificado</Text></Input>
        </FieldRow>
      </Group>
      <Cells $cols="47px 45px 90px" $gap={8} $h={20} $pt={2}>
        <LabelCell><Text s={12} c={g} w={27}>IVA %</Text></LabelCell>
        <LabelCell><Text s={12} c={g} w={34}>Desc %</Text></LabelCell>
        <LabelCell><Text s={12} c={g} w={77}>Cod de producto</Text></LabelCell>
      </Cells>
      <Cells $cols="56px 51px 90px" $h={20}>
        <Combo $w={48}><ComboValue $w={26}><Text s={12} c={g} w={11}>11</Text></ComboValue><Caret w={8} /></Combo>
        <Input $w={45} />
        <Input $w={90} />
      </Cells>
      <Cells $cols="57px 84px 56px" $h={18}>
        <LabelCell><Text s={12} c={g} w={22}>Cant</Text></LabelCell>
        <LabelCell><Text s={12} c={g} w={40}>Precio U</Text></LabelCell>
        <LabelCell><Text s={12} c={g} w={34}>Medida</Text></LabelCell>
      </Cells>
      <Cells $cols="64px 81px 52px" $h={20}>
        <Input $w={59}><Text s={12} c={g} w={5}>1</Text></Input>
        <Input $w={75}><Text s={12} c={g} w={6}>0</Text></Input>
        <Input $w={52} />
      </Cells>
      <Cells $cols="195px" $h={18}><LabelCell><Text s={12} c={g} w={54}>Descripción</Text></LabelCell></Cells>
      <Input $w={197} $h={59} />
      <Bottom>
        <Retention>
          <LabelCell><Text s={12} c={g} w={47}>Retención</Text></LabelCell>
          <Combo $w={63} $focus>
            <ComboValue $w={42}><svg width="2" height="14"><rect x="0" width="1" height="14" fill="#222" /></svg></ComboValue>
            <Caret w={8} />
          </Combo>
        </Retention>
        <Actions>
          <Action $w={77}><Plus s={16} /><Text s={12} b f={segoe} c="#96821f" w={51}>Agregar P</Text></Action>
          <Action $w={67}>
            <svg width="17" height="16" viewBox="0 0 17 16"><path d="M4 .5l4.500 4.500L13 .5 16.500 4l-4.500 4 4.500 4-3.500 3.500L8.500 11 4 15.500.500 12 5 8 .5 4z" fill="#c4271f" stroke="#8e1712" strokeWidth=".8" /></svg>
            <Text s={12} b f={segoe} c="#96821f" w={43}>Quitar P</Text>
          </Action>
          <Action $w={67} $mt={14}>
            <svg width="18" height="19" viewBox="0 0 19 19"><path d="M11 11l7 7" stroke="#3c3c3c" strokeWidth="3.200" /><circle cx="7.500" cy="7.500" r="6" fill="#d4e6ef" stroke="#98a4ac" strokeWidth="1.600" /></svg>
            <Text s={12} b f={segoe} c="#96821f" w={43}>Buscar P</Text>
          </Action>
        </Actions>
      </Bottom>
    </LeftPanel>
  );
}

function Invoice() {
  const k = "#2d2d2d";
  const t = 12;
  return (
    <RightPanel>
      <Client>
        <ClientFields>
          <ClientRow>
            <ClientLabel $pt={3} $ml={7} $w={38}><Text s={13} b c="#222" w={30}>RFC:</Text></ClientLabel>
            <ClientInput $w={125} $h={21} $pl={12}><Text s={12.500} c={k} w={100}>FASDASDASDASD</Text></ClientInput>
            <ClientLabel $pt={4} $ml={14} $w={60}><Text s={13} b c="#222" w={53}>Nombre:</Text></ClientLabel>
            <ClientInput $w={379} $h={21} $mt={2} $pl={2}><Text s={12.500} c={k} w={149}>DASD asd aS DAA SDAS Da</Text></ClientInput>
          </ClientRow>
          <ClientRow $mt={7}>
            <ClientLabel $pt={7} $ml={6} $w={68}><Text s={13} b c="#222" w={63}>Domicilio:</Text></ClientLabel>
            <ClientInput $w={552} $h={40}><Text s={12.500} c={k} w={172}>dasd as DAS DAS das das DAs d</Text></ClientInput>
          </ClientRow>
        </ClientFields>
        <Avatar><ClientSearch /></Avatar>
      </Client>
      <Table>
        <HeadRow>
          <HeadCell $x={10}><Text s={t} c={k} w={22}>Cant</Text></HeadCell>
          <HeadCell $x={90}><Text s={t} c={k} w={54}>Descripción</Text></HeadCell>
          <HeadCell $x={8}><Text s={t} c={k} w={24}>Desc</Text><Caret c="#999" w={8} /></HeadCell>
          <HeadCell $x={13}><Text s={t} c={k} w={44}>P Unitario</Text></HeadCell>
          <HeadCell $x={30}><Text s={t} c={k} w={34}>Importe</Text></HeadCell>
          <HeadCell $x={12}><Text s={t} c={k} w={17}>IVA</Text></HeadCell>
          <HeadCell $x={13}><Text s={t} c={k} w={34}>Medida</Text></HeadCell>
        </HeadRow>
        {rows.map(([alt, h, desc, w, d, p, iva, m, mw], i) => (
          <Row key={i} $alt={alt} $h={h}>
            <Cell $pl={26}><Text s={t} c={k} w={6}>1</Text></Cell>
            <Cell><Text s={t} c={k} w={w}>{desc}</Text></Cell>
            <Cell><Text s={t} c={k} w={6}>{d}</Text></Cell>
            <Cell $pl={4}><Text s={t} c={k} w={23}>{p}</Text></Cell>
            <Cell $pl={4}><Text s={t} c={k} w={23}>{p}</Text></Cell>
            <Cell $pl={4} $sel={i === 0}><Text s={t} c={i === 0 ? "#cfe6ff" : k} w={11}>{iva}</Text></Cell>
            <Cell><Text s={t} c={k} w={mw}>{m}</Text></Cell>
          </Row>
        ))}
      </Table>
      <Footer>
        <Letters>
          <Text s={13} b c="#222" w={93}>Total con letra:</Text>
          <LettersBox><Text s={12} c={k} w={344}>(CINCO MIL QUINIENTOS TREINTA Y DOS  PESOS 00/100 M.N.)</Text></LettersBox>
        </Letters>
        <Totals>
          {totals.map(([label, lw, value, vw, mt]) => (
            <TotalRow key={label} $mt={mt}>
              <Text s={12.500} b c="#111" w={lw}>{label}</Text>
              <Text s={12.500} b c="#111" w={vw}>{value}</Text>
            </TotalRow>
          ))}
        </Totals>
      </Footer>
    </RightPanel>
  );
}

export default function App() {
  return (
    <Desktop>
      <Global />
      <TopPanel>
        <Text s={13.500} b f={ubuntu} c="#dfdbd2" w={198}>Call with Gamaliel Mendoza</Text>
        <Indicators>
          <Tile $bg="linear-gradient(#51cba1, #35a87e)"><svg width="12" height="12" viewBox="0 0 12 12"><path d="M6 .8L10 4v4L6 11.200 2 8V4z" fill="none" stroke="#d8f5ea" /><path d="M8 4.500H4.500v1.500h3v1.700H4M6 3v6" stroke="#d8f5ea" fill="none" /></svg></Tile>
          <Gap $w={11} />
          <svg width="22" height="22" viewBox="0 0 22 22"><path d="M3 1.500q4-2 7 0 9-.5 10.500 8.500 2 4 .5 8-2.500 4.500-8 2.500Q3 21 2 12-.500 6 3 1.500z" fill="#ee2040" stroke="#f88" strokeWidth=".8" /><rect x="6" y="9.500" width="10" height="3" rx="1" fill="#fff" /></svg>
          <Gap $w={9} />
          <Meter c="#1b84d2" base={1} seed={2} />
          <Gap $w={2} />
          <Meter c="#f3e414" base={4.500} seed={4} />
          <Gap $w={12} />
          <svg width="18" height="13" viewBox="0 0 18 13"><rect width="18" height="13" fill="#dfdbd2" /><path d="M1 1l8 7 8-7M1 12l5.500-5.500M17 12l-5.500-5.500" fill="none" stroke="#3f3e39" strokeWidth="1.200" /></svg>
          <Gap $w={12} />
          <Tile $bg="linear-gradient(#4d86a6, #2e6585)"><svg width="12" height="16" viewBox="0 0 12 16"><path d="M2 4.500l8 7L6 15V1l4 3.500-8 7" fill="none" stroke="#e8f2f6" strokeWidth="1.500" /></svg></Tile>
          <Gap $w={11} />
          <svg width="20" height="14" viewBox="0 0 20 14"><path d="M1 5q9-7 18 0M4 8q6-4.500 12 0" fill="none" stroke="#95938b" strokeWidth="1.600" /><path d="M6.500 10.500q3.500-2.500 7 0L10 14z" fill="#dfdbd2" /></svg>
          <Gap $w={13} />
          <svg width="21" height="16" viewBox="0 0 21 16"><path d="M0 5.500h4l4-4v13l-4-4H0z" fill="#dfdbd2" /><path d="M10.500 5q2 3 0 6M13.500 3q3.500 5 0 10M16.500 1q5 7 0 14" fill="none" stroke="#dfdbd2" strokeWidth="1.500" /></svg>
          <Gap $w={14} />
          <Text s={14} f={ubuntu} c="#dfdbd2" w={53}>5:42 PM</Text>
          <Gap $w={12} />
          <svg width="14" height="14" viewBox="0 0 14 14"><path d="M3.500 4Q3.500.500 7 .5T10.500 4 8.500 8.500q0 1.500 3 2T14 13.500H0q0-2.500 2.500-3t3-2Q3.500 7 3.500 4z" fill="#dfdbd2" /></svg>
          <Gap $w={5} />
          <Text s={14} f={ubuntu} c="#dfdbd2" w={27}>Ivan</Text>
          <Gap $w={11} />
          <svg width="18" height="18" viewBox="0 0 18 18"><circle cx="9" cy="9.500" r="5.500" fill="none" stroke="#dfdbd2" strokeWidth="1.800" /><circle cx="9" cy="9.500" r="7.300" fill="none" stroke="#dfdbd2" strokeWidth="2" strokeDasharray="2.300 3.430" /><path d="M9 0v9" stroke="#4b4a44" strokeWidth="5" /><path d="M9 1v8" stroke="#dfdbd2" strokeWidth="2" /></svg>
        </Indicators>
      </TopPanel>
      <Stage>
        <SideStrip $w={24} />
        <Remote>
          <BrowserPane />
          <Page>
            <SideMenu />
            <MainCol>
              <UserBar><Text s={15.500} c="#9b9b9b" w={78}>Victor Hugo</Text><Text s={12.500} c="#6a8fd0" w={75} u>Cerrar sesión</Text></UserBar>
              <GreyBox />
              <OpcBox>
                <div><Text s={12.500} b c="#555" w={24}>Opc</Text></div>
                <div><svg width="18" height="18" viewBox="0 0 18 18"><circle cx="9" cy="9" r="4.500" fill="none" stroke="#a2aaa6" strokeWidth="3" /><circle cx="9" cy="9" r="7" fill="none" stroke="#a2aaa6" strokeWidth="2" strokeDasharray="2.700 2.800" /></svg></div>
              </OpcBox>
            </MainCol>
            <Scrollbar>
              <svg width="7" height="4"><path d="M3.500 0L7 4H0z" fill="#555" /></svg>
              <Thumb><svg width="6" height="7"><path d="M0 1h6M0 3.500h6M0 6h6" stroke="#888" /></svg></Thumb>
              <svg width="7" height="4"><path d="M0 0h7L3.500 4z" fill="#555" /></svg>
            </Scrollbar>
          </Page>
          <TaskbarPane />
        </Remote>
        <SideStrip $w={20} $right />
      </Stage>

      <Win>
        <TitleBar>
          <Qr s={14} n={15} />
          <Text s={11.500} f={segoe} c="#1c1c1c" w={59}>Facturación</Text>
          <CloseButton><svg width="11" height="10" viewBox="0 0 11 10"><path d="M1.500 1l8 8M9.500 1l-8 8" stroke="#5a2420" strokeWidth="3.600" /><path d="M1.500 1l8 8M9.500 1l-8 8" stroke="#fff" strokeWidth="2.300" /></svg></CloseButton>
        </TitleBar>
        <Body>
          <Brand><Text s={34} f='"DejaVu Sans", sans-serif' c="#d9f2f5" w={286}>Admonster CBB</Text></Brand>
          <ToolStrip />
          <Panels>
            <ProductForm />
            <Invoice />
          </Panels>
        </Body>
      </Win>

      {[282, 359, 440, 489, 679].map((y) => (
        <Overlay key={y} $x={1346} $y={y}><svg width="6" height="12" viewBox="0 0 6 12"><path d="M0 0l5 8H2l2 3-2 1-2-3z" fill="#f4f4f4" /></svg></Overlay>
      ))}
      <Overlay $x={715} $y={561}><Pointer /></Overlay>
      <Overlay $x={908} $y={440}><Pointer dark /></Overlay>
      <Tooltip><Text s={12} f='"DejaVu Sans", sans-serif' c="#222" w={111}>Gamaliel Mendoza</Text></Tooltip>
    </Desktop>
  );
}
